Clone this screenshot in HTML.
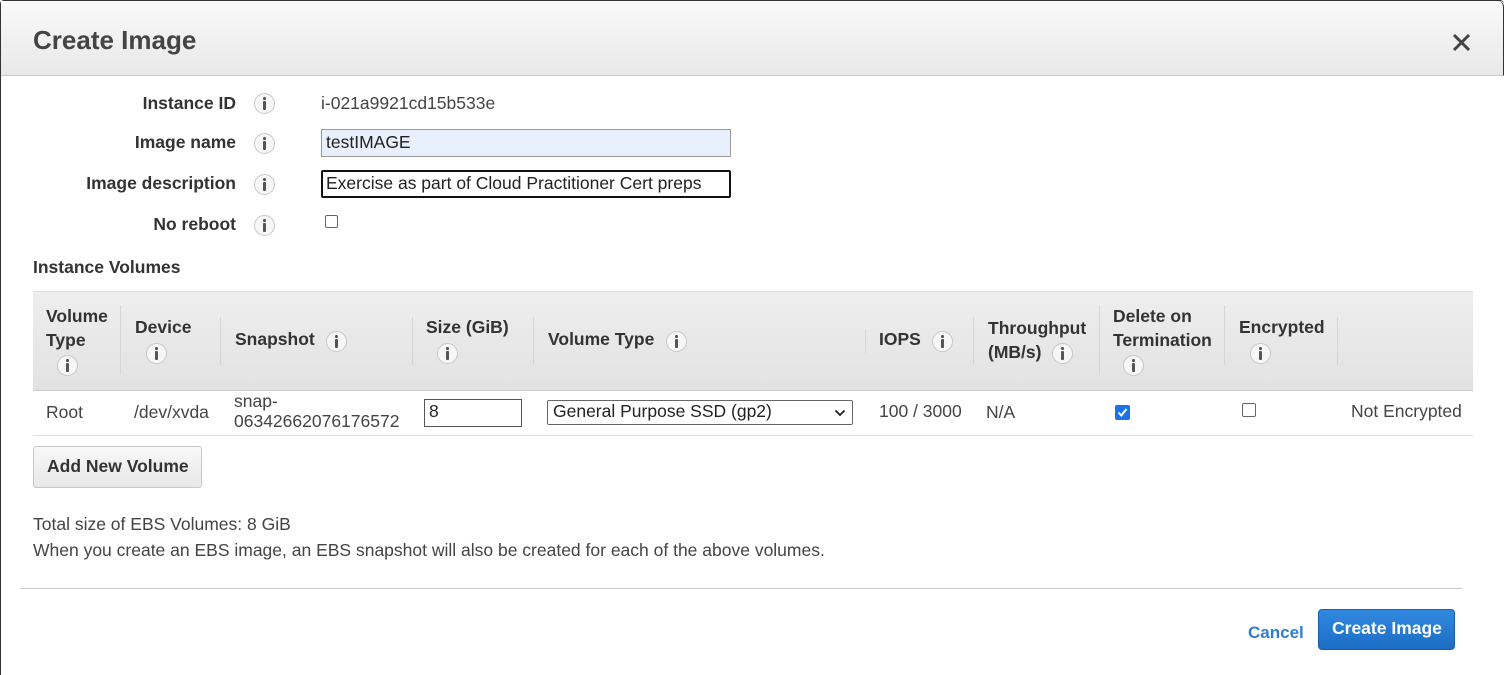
<!DOCTYPE html>
<html><head><meta charset="utf-8">
<style>
*{margin:0;padding:0;box-sizing:border-box}
html,body{width:1506px;height:675px;overflow:hidden;background:#fff;font-family:"Liberation Sans",Arial,sans-serif;color:#444;font-size:17.5px}
.a{position:absolute;white-space:nowrap;line-height:20px}
.b{font-weight:bold;color:#333}
.i{position:absolute;width:21px;height:21px;border:1.5px solid #c8c8c8;border-radius:50%;background:#f6f6f6;}
.i::after{content:"";position:absolute;left:8px;top:6.5px;width:2.5px;height:9px;background:#555;border-radius:1px}
.i::before{content:"";position:absolute;left:8px;top:3px;width:2.5px;height:2.5px;background:#555;border-radius:50%}
.sep{position:absolute;width:1px;background:#d6d6d6}
</style></head><body>
<div style="position:absolute;left:0;top:0;width:1504px;height:675px;border-left:1.5px solid #333;border-top:1.5px solid #333;border-radius:4px 4px 0 0"></div>
<div style="position:absolute;left:1px;top:1px;width:1503px;height:75px;background:linear-gradient(#fafafa,#e8e8e8);border-bottom:1px solid #ccc;border-top-right-radius:6px;border-right:1.5px solid #333"></div>
<div class="a b" style="left:33px;top:25px;font-size:26px;line-height:30px;color:#444">Create Image</div>
<svg style="position:absolute;left:1452px;top:33px" width="19" height="19"><path d="M2 2L17 17M17 2L2 17" stroke="#444" stroke-width="3"/></svg>

<div class="a b" style="right:1270px;top:93px">Instance ID</div>
<div class="a b" style="right:1270px;top:132px">Image name</div>
<div class="a b" style="right:1270px;top:173px">Image description</div>
<div class="a b" style="right:1270px;top:214px">No reboot</div>
<div class="i" style="left:254px;top:93px"></div>
<div class="i" style="left:254px;top:133px"></div>
<div class="i" style="left:254px;top:174px"></div>
<div class="i" style="left:254px;top:215px"></div>
<div class="a" style="left:321px;top:93px">i-021a9921cd15b533e</div>
<div style="position:absolute;left:321px;top:129px;width:410px;height:28px;background:#e8f0fe;border:1px solid #999"></div>
<div class="a" style="left:326px;top:132px;color:#222">testIMAGE</div>
<div style="position:absolute;left:321px;top:170px;width:410px;height:28px;border:2px solid #111;border-radius:2px"></div>
<div class="a" style="left:326px;top:173px;color:#222">Exercise as part of Cloud Practitioner Cert preps</div>
<div style="position:absolute;left:325px;top:215px;width:13px;height:13px;border:1px solid #666;border-radius:2px"></div>

<div class="a b" style="left:33px;top:257px">Instance Volumes</div>
<div style="position:absolute;left:33px;top:291px;width:1440px;height:100px;background:linear-gradient(#eeeeee,#e2e2e2);border-top:1px solid #ddd;border-bottom:1px solid #ccc"></div>
<div class="sep" style="left:120px;top:305px;height:70px"></div>
<div class="sep" style="left:220px;top:317px;height:48px"></div>
<div class="sep" style="left:412px;top:317px;height:48px"></div>
<div class="sep" style="left:533px;top:317px;height:48px"></div>
<div class="sep" style="left:865px;top:329px;height:24px"></div>
<div class="sep" style="left:973px;top:317px;height:48px"></div>
<div class="sep" style="left:1099px;top:305px;height:70px"></div>
<div class="sep" style="left:1224px;top:305px;height:60px"></div>
<div class="sep" style="left:1337px;top:317px;height:48px"></div>

<div class="a b" style="left:46px;top:304px;line-height:24px">Volume<br>Type</div><div class="i" style="left:57px;top:355px"></div>
<div class="a b" style="left:135px;top:317px">Device</div><div class="i" style="left:146px;top:343px"></div>
<div class="a b" style="left:235px;top:329px">Snapshot</div><div class="i" style="left:326px;top:331px"></div>
<div class="a b" style="left:426px;top:317px">Size (GiB)</div><div class="i" style="left:437px;top:343px"></div>
<div class="a b" style="left:548px;top:329px">Volume Type</div><div class="i" style="left:666px;top:331px"></div>
<div class="a b" style="left:879px;top:329px">IOPS</div><div class="i" style="left:932px;top:331px"></div>
<div class="a b" style="left:988px;top:316px;line-height:24px">Throughput<br>(MB/s)</div><div class="i" style="left:1052px;top:343px"></div>
<div class="a b" style="left:1113px;top:304px;line-height:24px">Delete on<br>Termination</div><div class="i" style="left:1123px;top:355px"></div>
<div class="a b" style="left:1239px;top:317px">Encrypted</div><div class="i" style="left:1250px;top:343px"></div>

<div class="a" style="left:46px;top:402px">Root</div>
<div class="a" style="left:134px;top:402px">/dev/xvda</div>
<div class="a" style="left:234px;top:391px;line-height:20px">snap-<br>06342662076176572</div>
<div style="position:absolute;left:424px;top:399px;width:98px;height:28px;border:1px solid #555"></div>
<div class="a" style="left:429px;top:401px;color:#222">8</div>
<div style="position:absolute;left:547px;top:400px;width:306px;height:25px;border:1px solid #666;border-radius:2px"></div>
<div class="a" style="left:553px;top:401px;color:#222">General Purpose SSD (gp2)</div>
<svg style="position:absolute;left:834px;top:408px" width="12" height="10"><path d="M1.5 2.5L6 7L10.5 2.5" stroke="#222" stroke-width="1.8" fill="none"/></svg>
<div class="a" style="left:879px;top:401px">100 / 3000</div>
<div class="a" style="left:986px;top:402px">N/A</div>
<div style="position:absolute;left:1115px;top:405px;width:15px;height:15px;background:#1a73e8;border-radius:2px"></div>
<svg style="position:absolute;left:1115px;top:405px" width="15" height="15"><path d="M3.5 7.5L6.3 10.5L11.5 4" stroke="#fff" stroke-width="2" fill="none"/></svg>
<div style="position:absolute;left:1242px;top:403px;width:14px;height:14px;border:1px solid #666;border-radius:2px"></div>
<div class="a" style="left:1351px;top:401px">Not Encrypted</div>
<div style="position:absolute;left:33px;top:435px;width:1440px;height:1px;background:#ddd"></div>

<div style="position:absolute;left:33px;top:446px;width:169px;height:42px;border:1px solid #c8c8c8;border-radius:3px;background:linear-gradient(#f8f8f8,#e8e8e8)"></div>
<div class="a b" style="left:47px;top:456px">Add New Volume</div>

<div class="a" style="left:33px;top:514px">Total size of EBS Volumes: 8 GiB</div>
<div class="a" style="left:33px;top:540px">When you create an EBS image, an EBS snapshot will also be created for each of the above volumes.</div>
<div style="position:absolute;left:20px;top:588px;width:1442px;height:1px;background:#ccc"></div>

<div class="a b" style="left:1248px;top:623px;color:#2e7ed6;font-size:17px">Cancel</div>
<div style="position:absolute;left:1318px;top:609px;width:137px;height:41px;border-radius:4px;background:linear-gradient(#3189e0,#1d6cc4);border:1px solid #1a5fae"></div>
<div class="a b" style="left:1332px;top:618px;color:#fff;font-size:17.5px">Create Image</div>
</body></html>
